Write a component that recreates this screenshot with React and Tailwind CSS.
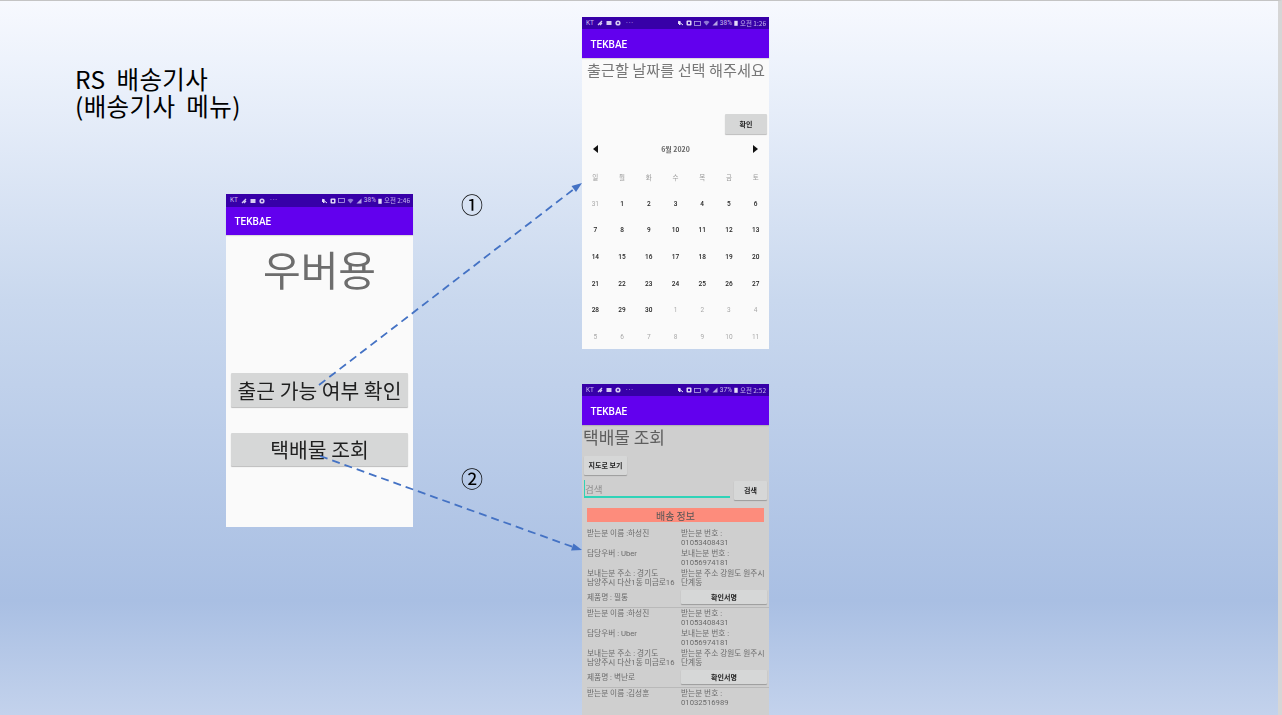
const KR = { fontFamily: '"Noto Sans CJK KR", "Noto Sans", sans-serif' };
const RB = { fontFamily: 'Roboto, "Noto Sans CJK KR", sans-serif' };

function StatusBar({ time, pct, variant }) {
  return (
    <div className={`${variant === 'a' ? 'h-[13px]' : 'h-[12px]'} shrink-0 bg-[#3700a8] flex items-center justify-between pl-[2px] pr-[3px] text-[6.5px] leading-none text-[#c9b8ee]`} style={RB}>
      <div className="flex items-center gap-[3px]">
        <span className="ml-[2px]">KT</span>
        <svg width="6" height="6" viewBox="0 0 6 6"><path d="M1 5 L5 1 M3 5 L5 3" stroke="#d8ccf2" strokeWidth="1.3" /></svg>
        <svg width="6" height="6" viewBox="0 0 6 6"><rect x="0.5" y="1" width="5" height="4" fill="#d8ccf2" /></svg>
        <svg width="6" height="6" viewBox="0 0 6 6"><circle cx="3" cy="3" r="2.6" fill="#d8ccf2" /><circle cx="3" cy="3" r="1" fill="#3700a8" /></svg>
        <span className="ml-[2px] tracking-[1px]">···</span>
      </div>
      <div className="flex items-center gap-[2px]">
        <svg width="7" height="6" viewBox="0 0 7 6"><path d="M1 1 L6 5 M1 3 L3 1 V5 Z" stroke="#e6def8" strokeWidth="1" fill="#e6def8" /></svg>
        <svg width="6" height="6" viewBox="0 0 6 6"><rect x="0.5" y="0.5" width="5" height="5" rx="1" fill="#e6def8" /><circle cx="3" cy="3" r="1.2" fill="#3700a8" /></svg>
        <svg width="7" height="5" viewBox="0 0 7 5"><rect x="0.5" y="0.5" width="6" height="4" fill="none" stroke="#b7a5e6" strokeWidth="0.8" /></svg>
        <svg width="7" height="6" viewBox="0 0 7 6"><path d="M0.5 2 A4 4 0 0 1 6.5 2 L3.5 5.5 Z" fill="#8f78d6" /></svg>
        <svg width="6" height="6" viewBox="0 0 6 6"><path d="M0.5 5.5 H5.5 V0.5 Z" fill="#b7a5e6" /></svg>
        <span>{pct}</span>
        <svg width="4" height="6" viewBox="0 0 4 6"><rect x="0.3" y="0.8" width="3.4" height="5" fill="#e6def8" /></svg>
        <span style={KR}>오전 {time}</span>
      </div>
    </div>
  );
}

function Toolbar({ compact }) {
  return (
    <div className={`${compact ? 'h-[28px]' : 'h-[29px] pt-[1px]'} shrink-0 bg-[#6200ee] flex items-center pl-[8.5px] text-[10px] font-medium text-white shadow-[0_1px_1px_rgba(0,0,0,0.12)]`} style={RB}>
      TEKBAE
    </div>
  );
}

function Button({ children, className }) {
  return (
    <div className={`bg-[#d6d7d7] shadow-[0_1px_1px_rgba(0,0,0,0.25)] rounded-[1px] flex items-center justify-center font-medium text-[#222] ${className}`} style={KR}>
      {children}
    </div>
  );
}

const days = ['일', '월', '화', '수', '목', '금', '토'];
const weeks = [
  [31, 1, 2, 3, 4, 5, 6],
  [7, 8, 9, 10, 11, 12, 13],
  [14, 15, 16, 17, 18, 19, 20],
  [21, 22, 23, 24, 25, 26, 27],
  [28, 29, 30, 1, 2, 3, 4],
  [5, 6, 7, 8, 9, 10, 11],
];

function Calendar() {
  return (
    <div className="flex flex-col">
      <div className="h-[26px] flex items-center justify-between px-[11px] mb-[2.5px]">
        <svg width="5" height="8" viewBox="0 0 5 8"><path d="M5 0 V8 L0 4 Z" fill="#111" /></svg>
        <span className="text-[7px] font-bold text-[#666]" style={KR}>6월 2020</span>
        <svg width="5" height="8" viewBox="0 0 5 8"><path d="M0 0 V8 L5 4 Z" fill="#111" /></svg>
      </div>
      <div className="grid grid-cols-7 auto-rows-[26.7px] text-[6.5px] text-center" style={RB}>
        {days.map((d) => (
          <div key={d} className="flex items-center justify-center text-[#9a9a9a]" style={KR}>{d}</div>
        ))}
        {weeks.map((w, i) =>
          w.map((n, j) => {
            const out = (i === 0 && j === 0) || (i === 4 && j > 2) || i === 5;
            return (
              <div key={`${i}-${j}`} className={`flex items-center justify-center ${out ? 'text-[#a8a8a8]' : 'text-[#222] font-medium'}`}>{n}</div>
            );
          })
        )}
      </div>
    </div>
  );
}

function Record({ name, phone, product, lastOnly }) {
  return (
    <div className="flex flex-col text-[7.7px] leading-[9px] text-[#6b6b6b]" style={RB}>
      <div className="grid grid-cols-[94px_1fr] h-[19px] pt-[1px]">
        <span>받는분 이름 :{name}</span>
        <span>받는분 번호 :<br />{phone}</span>
      </div>
      {!lastOnly && (
        <>
          <div className="grid grid-cols-[94px_1fr] h-[20px] pt-[2px]">
            <span>담당우버 : Uber</span>
            <span>보내는분 번호 :<br />01056974181</span>
          </div>
          <div className="grid grid-cols-[94px_1fr] h-[20px] pt-[2px]">
            <span className="whitespace-nowrap">보내는분 주소 : 경기도<br />남양주시 다산1동 미금로16</span>
            <span className="whitespace-nowrap">받는분 주소 강원도 원주시<br />단계동</span>
          </div>
          <div className="flex items-center justify-between pr-[2px] h-[21px] border-b border-[#b9b9b9]">
            <span>제품명 : {product}</span>
            <Button className="w-[86px] h-[14px] text-[7px] !font-bold">확인서명</Button>
          </div>
        </>
      )}
    </div>
  );
}

export default function App() {
  return (
    <div className="relative w-[1282px] h-[715px] overflow-hidden bg-[linear-gradient(180deg,#f7f9fe_0%,#eef3fc_8%,#c9d8ee_42%,#a9bfe3_84%,#c3d2ec_100%)] border-t border-[#c4c4c4] border-r-[4px] border-r-[#d6d6d6]" style={KR}>
      <div className="absolute left-[75px] top-[64px] text-[24.5px] leading-[27px] tracking-[0.4px] [word-spacing:5px] text-black" style={KR}>
        RS 배송기사<br />(배송기사 메뉴)
      </div>

      {/* Phone A */}
      <div className="absolute left-[226px] top-[193px] w-[187px] h-[333px] bg-[#fafafa] flex flex-col blur-[0.3px]">
        <StatusBar time="2:46" pct="38%" variant="a" />
        <Toolbar compact />
        <div className="text-center text-[41px] leading-[60px] mt-[3px] text-[#6d6d6d]" style={KR}>우버용</div>
        <div className="flex flex-col gap-[26px] px-[5px] mt-[75px]">
          <Button className="h-[34px] text-[20.4px] !font-normal !text-[#1f1f1f] whitespace-nowrap">출근 가능 여부 확인</Button>
          <Button className="h-[33px] text-[20.4px] !font-normal !text-[#1f1f1f]">택배물 조회</Button>
        </div>
      </div>

      {/* Phone B */}
      <div className="absolute left-[582px] top-[16px] w-[187px] h-[332px] bg-[#fafafa] flex flex-col blur-[0.3px]">
        <StatusBar time="1:26" pct="38%" variant="b" />
        <Toolbar />
        <div className="text-[15.2px] leading-[22px] pl-[5px] whitespace-nowrap text-[#777]" style={KR}>출근할 날짜를 선택 해주세요</div>
        <div className="flex justify-end pr-[2px] mt-[34px]">
          <Button className="w-[42px] h-[20px] text-[7px] !font-bold">확인</Button>
        </div>
        <div className="mt-[2px]">
          <Calendar />
        </div>
      </div>

      {/* Phone C */}
      <div className="absolute left-[582px] top-[383px] w-[187px] h-[332px] bg-[#cfcfcf] flex flex-col overflow-hidden blur-[0.3px]">
        <StatusBar time="2:52" pct="37%" variant="b" />
        <Toolbar />
        <div className="text-[17px] leading-[24px] pl-[1px] text-[#5e5e5e]" style={KR}>택배물 조회</div>
        <div className="pl-[2px] mt-[7px]">
          <Button className="w-[43px] h-[19px] text-[7px] !font-bold">지도로 보기</Button>
        </div>
        <div className="flex items-start justify-between pl-[2px] pr-[2px] mt-[5px]">
          <div className="w-[146px] h-[18px] pt-[3px] border-b-2 border-l border-[#2fd3b8] text-[9.5px] leading-[12px] text-[#8f8f8f]" style={KR}>검색</div>
          <Button className="w-[33px] h-[19px] mt-[1px] text-[7px] !font-bold">검색</Button>
        </div>
        <div className="mx-[5px] mt-[8px] h-[14px] bg-[#fd8c7c] flex items-center justify-center text-[10px] text-[#555]" style={KR}>배송 정보</div>
        <div className="flex flex-col pl-[5px] mt-[6px]">
          <Record name="하성진" phone="01053408431" product="필통" />
          <Record name="하성진" phone="01053408431" product="벽난로" />
          <Record name="김성훈" phone="01032516989" lastOnly />
        </div>
      </div>

      {/* Arrows */}
      <svg className="absolute left-0 top-0 pointer-events-none" width="1282" height="715" viewBox="0 0 1282 715">
        <g stroke="#4472c4" strokeWidth="1.8" strokeDasharray="8 5" fill="none">
          <line x1="319" y1="384" x2="574" y2="188" />
          <line x1="320" y1="455" x2="573" y2="546" />
        </g>
        <path d="M582 182 L571.5 185 L576 191 Z" fill="#4472c4" />
        <path d="M582 549 L571 549.5 L573.5 542.5 Z" fill="#4472c4" />
      </svg>

      <div className="absolute left-[459px] top-[188px] w-[26px] text-center text-[22px] leading-[28px] text-black" style={KR}>①</div>
      <div className="absolute left-[459px] top-[462px] w-[26px] text-center text-[22px] leading-[28px] text-black" style={KR}>②</div>
    </div>
  );
}
